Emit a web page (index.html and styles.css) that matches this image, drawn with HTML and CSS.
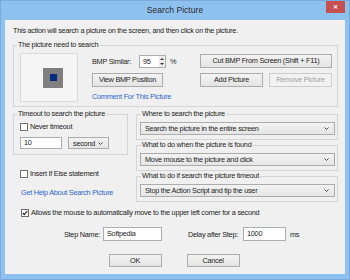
FILE: index.html
```html
<!DOCTYPE html>
<html lang="en">
<head>
    <meta charset="UTF-8">
    <title>Search Picture</title>
    <link rel="stylesheet" href="styles.css">
</head>
<body>
    <div class="window">
        <div class="titlebar">
            <span class="title">Search Picture</span>
            <span class="close">&#x2715;</span>
        </div>
        <div class="client">
            <p class="intro">This action will search a picture on the screen, and then click on the picture.</p>

            <fieldset class="group pic-group">
                <legend>The picture need to search</legend>
                <div class="pic-body">
                    <div class="preview">
                        <div class="thumb"><div class="thumb-dot"></div></div>
                    </div>
                    <div class="pic-controls">
                        <div class="similar">
                            <span>BMP Similar:</span>
                            <span class="spin">
                                <span class="spin-val">95</span>
                                <svg class="spin-arrows" width="6" height="11" viewBox="0 0 6 11">
                                    <path d="M1 4 L3 2 L5 4 Z" fill="#333"/>
                                    <path d="M1 7 L3 9 L5 7 Z" fill="#333"/>
                                </svg>
                            </span>
                            <span class="pct">%</span>
                        </div>
                        <button class="btn btn-cut">Cut BMP From Screen (Shift + F11)</button>
                        <button class="btn btn-view">View BMP Position</button>
                        <div class="btn-pair">
                            <button class="btn">Add Picture</button>
                            <button class="btn" disabled>Remove Picture</button>
                        </div>
                        <a class="link">Comment For This Picture</a>
                    </div>
                </div>
            </fieldset>

            <div class="middle">
                <div class="left-col">
                    <fieldset class="group timeout-group">
                        <legend>Timeout to search the picture</legend>
                        <label class="check-row"><span class="box"></span>Never timeout</label>
                        <div class="timeout-row">
                            <span class="textbox tb-timeout">10</span>
                            <span class="select sel-unit">
                                <span>second</span>
                                <svg width="5" height="3" viewBox="0 0 5 3"><path d="M0.5 0.5 L2.5 2.5 L4.5 0.5" fill="none" stroke="#333" stroke-width="0.9"/></svg>
                            </span>
                        </div>
                    </fieldset>
                    <label class="check-row insert-row"><span class="box"></span>Insert If Else statement</label>
                    <a class="link help-link">Get Help About Search Picture</a>
                </div>

                <div class="right-col">
                    <fieldset class="group option-group">
                        <legend>Where to search the picture</legend>
                        <span class="select">
                            <span>Search the picture in the entire screen</span>
                            <svg width="5" height="3" viewBox="0 0 5 3"><path d="M0.5 0.5 L2.5 2.5 L4.5 0.5" fill="none" stroke="#333" stroke-width="0.9"/></svg>
                        </span>
                    </fieldset>
                    <fieldset class="group option-group">
                        <legend>What to do when the picture is found</legend>
                        <span class="select">
                            <span>Move mouse to the picture and click</span>
                            <svg width="5" height="3" viewBox="0 0 5 3"><path d="M0.5 0.5 L2.5 2.5 L4.5 0.5" fill="none" stroke="#333" stroke-width="0.9"/></svg>
                        </span>
                    </fieldset>
                    <fieldset class="group option-group">
                        <legend>What to do if search the picture timeout</legend>
                        <span class="select">
                            <span>Stop the Action Script and tip the user</span>
                            <svg width="5" height="3" viewBox="0 0 5 3"><path d="M0.5 0.5 L2.5 2.5 L4.5 0.5" fill="none" stroke="#333" stroke-width="0.9"/></svg>
                        </span>
                    </fieldset>
                </div>
            </div>

            <label class="check-row allow-row">
                <span class="box">
                    <svg width="6" height="6" viewBox="0 0 6 6"><path d="M0.8 3 L2.3 4.6 L5.2 1.2" fill="none" stroke="#222" stroke-width="1.1"/></svg>
                </span>
                Allows the mouse to automatically move to the upper left corner for a second
            </label>

            <div class="step-row">
                <span class="step-label">Step Name:</span>
                <span class="textbox tb-name">Softpedia</span>
                <span class="step-label delay-label">Delay after Step:</span>
                <span class="textbox tb-delay">1000</span>
                <span class="unit">ms</span>
            </div>

            <div class="buttons">
                <button class="btn btn-ok">OK</button>
                <button class="btn btn-cancel">Cancel</button>
            </div>
        </div>
    </div>
</body>
</html>
```

FILE: styles.css
```css
body {
    margin: 0;
    font-family: "Liberation Sans", Arial, sans-serif;
    font-size: 7.3px;
    letter-spacing: -0.25px;
    color: #1e1e1e;
}
.window {
    width: 350px;
    height: 280px;
    box-sizing: border-box;
    background: #8fc1ef;
    border: 1px solid #79aadd;
    padding: 0 4px 5px;
    display: flex;
    flex-direction: column;
}
.titlebar {
    height: 19px;
    display: grid;
    grid-template-columns: 1fr auto 1fr;
    align-items: start;
}
.title {
    grid-column: 2;
    font-size: 8.6px;
    letter-spacing: 0;
    line-height: 19px;
    color: #2c2c2c;
}
.close {
    grid-column: 3;
    justify-self: end;
    width: 19px;
    height: 12px;
    background: #c75050;
    color: #fff;
    font-size: 6px;
    line-height: 12px;
    text-align: center;
    font-weight: bold;
}
.client {
    flex: 1;
    background: #f0f0f0;
    padding: 6px 7px 0 8px;
}
.intro {
    margin: 0;
    line-height: 10px;
    white-space: nowrap;
}
.group {
    margin: 0;
    border: 1px solid #d5d5d5;
    min-width: 0;
}
.group legend {
    padding: 0 1px;
    line-height: 10px;
    white-space: nowrap;
}
.pic-group {
    margin-top: 4px;
    padding: 3px 5px 4px 6px;
}
.pic-group legend,
.timeout-group legend {
    margin-left: -3px;
}
.pic-body {
    display: flex;
    gap: 14px;
}
.preview {
    width: 58px;
    height: 49px;
    box-sizing: border-box;
    border: 1px solid #dadada;
    background: #f5f5f5;
    display: flex;
    align-items: center;
    padding-left: 22px;
}
.thumb {
    width: 20px;
    height: 20px;
    background: #7f7f7f;
    display: flex;
    align-items: center;
    justify-content: center;
}
.thumb-dot {
    width: 7px;
    height: 7px;
    background: #062d7e;
}
.pic-controls {
    margin-top: 1px;
    display: grid;
    grid-template-columns: 108px 132px;
    grid-template-rows: 14px 14px 10px;
    row-gap: 5px;
    align-items: center;
}
.similar {
    display: flex;
    align-items: center;
}
.spin {
    margin-left: 8px;
    width: 27px;
    height: 13px;
    box-sizing: border-box;
    border: 1px solid #abadb3;
    background: #fff;
    display: flex;
    align-items: center;
}
.spin-val {
    flex: 1;
    padding-left: 3px;
    line-height: 11px;
}
.spin-arrows {
    background: #ececec;
}
.pct {
    margin-left: 4px;
}
.btn {
    font-family: inherit;
    font-size: inherit;
    letter-spacing: inherit;
    color: #1e1e1e;
    height: 14px;
    padding: 0;
    border: 1px solid #acacac;
    background: linear-gradient(#f3f3f3, #e4e4e4);
    box-sizing: border-box;
    line-height: 12px;
}
.btn:disabled {
    color: #a3a3a3;
    border-color: #cdcdcd;
    background: #f2f2f2;
}
.btn-cut {
    width: 132px;
}
.btn-view {
    width: 71px;
}
.btn-pair {
    display: flex;
    gap: 6px;
}
.btn-pair .btn {
    width: 63px;
}
.link {
    color: #2f66cf;
    line-height: 10px;
    white-space: nowrap;
}
.middle {
    margin-top: 2px;
    display: flex;
    gap: 8px;
}
.left-col {
    width: 115px;
    display: flex;
    flex-direction: column;
}
.right-col {
    width: 202px;
    display: flex;
    flex-direction: column;
}
.timeout-group {
    padding: 3px 5px 5px 6px;
}
.check-row {
    display: flex;
    align-items: center;
    gap: 2px;
    line-height: 10px;
    white-space: nowrap;
}
.box {
    width: 8px;
    height: 8px;
    box-sizing: border-box;
    border: 1px solid #6f6f6f;
    background: #fff;
    display: flex;
    align-items: center;
    justify-content: center;
}
.timeout-row {
    margin-top: 5px;
    display: flex;
    gap: 6px;
}
.textbox {
    height: 12px;
    box-sizing: border-box;
    border: 1px solid #abadb3;
    background: #fff;
    padding-left: 3px;
    line-height: 10px;
}
.tb-timeout {
    width: 42px;
}
.select {
    height: 13px;
    box-sizing: border-box;
    border: 1px solid #acacac;
    background: linear-gradient(#f3f3f3, #e5e5e5);
    padding: 0 5px 0 4px;
    display: flex;
    align-items: center;
    justify-content: space-between;
    line-height: 11px;
    white-space: nowrap;
}
.sel-unit {
    width: 41px;
    height: 12px;
}
.insert-row {
    margin-top: 14px;
    padding-left: 7px;
}
.help-link {
    margin-top: 9px;
    padding-left: 8px;
}
.option-group {
    padding: 3px 2px 4px 3px;
}
.option-group legend {
    margin-left: 1px;
}
.allow-row {
    margin-top: 6px;
    padding-left: 8px;
}
.step-row {
    margin-top: 9px;
    display: flex;
    align-items: center;
    padding-left: 43px;
}
.step-label {
    width: 44px;
    text-align: right;
    white-space: nowrap;
}
.tb-name {
    margin-left: 3px;
    width: 59px;
    height: 14px;
    line-height: 12px;
}
.delay-label {
    width: 71px;
    margin-left: 5px;
}
.tb-delay {
    margin-left: 5px;
    width: 43px;
    height: 14px;
    line-height: 12px;
}
.unit {
    margin-left: 4px;
}
.buttons {
    margin-top: 13px;
    display: flex;
    justify-content: center;
    gap: 25px;
    padding-right: 3px;
}
.btn-ok,
.btn-cancel {
    width: 53px;
    height: 13px;
    line-height: 11px;
}
```
